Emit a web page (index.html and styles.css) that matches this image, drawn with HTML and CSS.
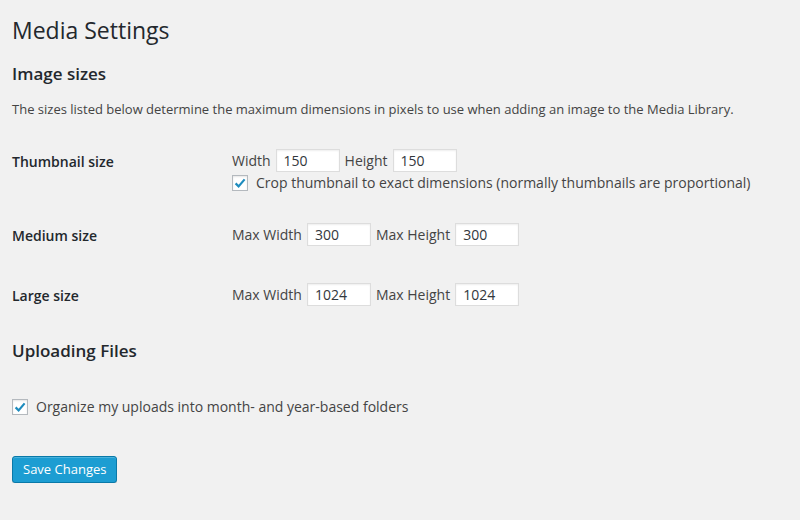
FILE: index.html
```html
<!DOCTYPE html>
<html lang="en">
<head>
    <meta charset="UTF-8">
    <title>Media Settings</title>
    <link rel="stylesheet" href="styles.css">
</head>
<body>
    <div class="wrap">
        <h1>Media Settings</h1>

        <h2 class="section-title">Image sizes</h2>
        <p class="description">The sizes listed below determine the maximum dimensions in pixels to use when adding an image to the Media Library.</p>

        <div class="form-row row-thumb">
            <div class="row-label">Thumbnail size</div>
            <div class="row-fields">
                <div class="field-line">
                    <label for="thumb_w">Width</label>
                    <input class="small-text" id="thumb_w" type="text" value="150">
                    <label for="thumb_h">Height</label>
                    <input class="small-text" id="thumb_h" type="text" value="150">
                </div>
                <div class="check-line">
                    <span class="checkbox"><svg width="14" height="14" viewBox="0 0 14 14"><path d="M2.6 7.4 L5.6 10.4 L11.6 3.4" fill="none" stroke="#1e8cbe" stroke-width="2.2"/></svg></span>
                    <span>Crop thumbnail to exact dimensions (normally thumbnails are proportional)</span>
                </div>
            </div>
        </div>

        <div class="form-row row-medium">
            <div class="row-label">Medium size</div>
            <div class="row-fields">
                <div class="field-line">
                    <label for="medium_w">Max Width</label>
                    <input class="small-text" id="medium_w" type="text" value="300">
                    <label for="medium_h">Max Height</label>
                    <input class="small-text" id="medium_h" type="text" value="300">
                </div>
            </div>
        </div>

        <div class="form-row row-large">
            <div class="row-label">Large size</div>
            <div class="row-fields">
                <div class="field-line">
                    <label for="large_w">Max Width</label>
                    <input class="small-text" id="large_w" type="text" value="1024">
                    <label for="large_h">Max Height</label>
                    <input class="small-text" id="large_h" type="text" value="1024">
                </div>
            </div>
        </div>

        <h2 class="section-title uploads-title">Uploading Files</h2>

        <div class="check-line uploads-check">
            <span class="checkbox"><svg width="14" height="14" viewBox="0 0 14 14"><path d="M2.6 7.4 L5.6 10.4 L11.6 3.4" fill="none" stroke="#1e8cbe" stroke-width="2.2"/></svg></span>
            <span>Organize my uploads into month- and year-based folders</span>
        </div>

        <div class="submit">
            <button class="button-primary" type="button">Save Changes</button>
        </div>
    </div>
</body>
</html>
```

FILE: styles.css
```css
body {
    margin: 0;
    padding: 0;
    background-color: #f1f1f1;
    color: #444;
    font-family: "Open Sans", sans-serif;
    font-size: 13px;
}
.wrap {
    padding: 0 12px;
}
h1 {
    margin: 16px 0 0;
    font-size: 23px;
    font-weight: 400;
    line-height: 29px;
    color: #23282d;
}
.section-title {
    margin: 18px 0 0;
    font-size: 17px;
    font-weight: 600;
    line-height: 22px;
    color: #23282d;
}
.description {
    margin: 15px 0 0;
    line-height: 18px;
}
.form-row {
    display: grid;
    grid-template-columns: 220px 1fr;
    font-size: 14px;
}
.row-thumb {
    margin-top: 31px;
}
.row-medium {
    margin-top: 32px;
}
.row-large {
    margin-top: 36px;
}
.row-label {
    padding-top: 1px;
    line-height: 23px;
    font-weight: 600;
    color: #23282d;
}
.field-line {
    display: flex;
    align-items: center;
    gap: 5px;
    height: 23px;
}
.small-text {
    box-sizing: border-box;
    width: 64px;
    height: 23px;
    margin: 0;
    padding: 0 7px;
    border: 1px solid #ddd;
    background: #fff;
    box-shadow: inset 0 1px 2px rgba(0, 0, 0, 0.07);
    color: #32373c;
    font-family: "Open Sans", sans-serif;
    font-size: 14px;
    outline: none;
}
.check-line {
    display: flex;
    align-items: center;
    height: 16px;
    margin-top: 3px;
    font-size: 14px;
    line-height: 16px;
}
.checkbox {
    box-sizing: border-box;
    display: flex;
    align-items: center;
    justify-content: center;
    width: 16px;
    height: 16px;
    margin-right: 8px;
    border: 1px solid #b4b9be;
    background: #fff;
    box-shadow: inset 0 1px 2px rgba(0, 0, 0, 0.1);
}
.uploads-title {
    margin-top: 33px;
}
.uploads-check {
    margin-top: 37px;
}
.submit {
    margin-top: 41px;
}
.button-primary {
    height: 27px;
    padding: 0 10px 1px;
    border: 1px solid #0a79a8;
    border-radius: 3px;
    background: #1c9dd2;
    box-shadow: inset 0 1px 0 rgba(120, 200, 230, 0.5), 0 1px 0 rgba(0, 0, 0, 0.15);
    color: #fff;
    font-family: "Open Sans", sans-serif;
    font-size: 13px;
    line-height: 25px;
    cursor: pointer;
}
```
